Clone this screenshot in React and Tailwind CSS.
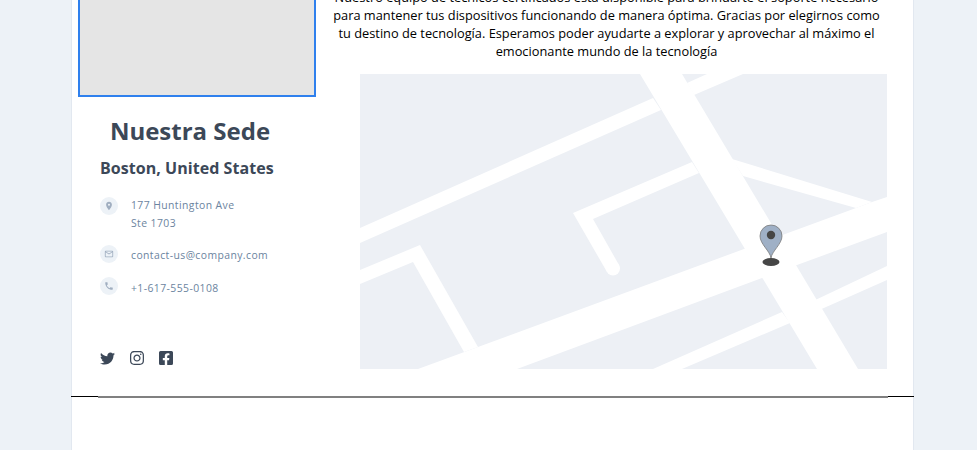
import React from "react";
import { FaTwitter, FaInstagram, FaFacebookSquare } from "react-icons/fa";
import { MdLocationOn, MdMailOutline, MdPhone } from "react-icons/md";

const roads = [
  "0,154 293,24 301,36 0,169",
  "327,9 347,0 383,0 334,21",
  "0,196 60,171 118,273 104,278 53,188 0,210",
  "58,295 118,273 384,175 496,134 512,128 527,123 527,158 437,191 157,295",
  "372,85 512,128 496,134 383,102",
  "213,139 332,88 339,99 233,145 259,191 247,198 213,139",
  "293,295 422,238 430,249 322,295",
  "430,238 527,192 527,206 430,249",
  "280,0 322,0 498,295 457,295",
];

const Contact = ({ icon: Ic, lines, className = "", textClass = "" }) => (
  <div className={`flex items-start gap-[13px] ${className}`}>
    <span className="flex h-[18px] w-[18px] shrink-0 items-center justify-center rounded-full bg-[#edf2f7] text-[#a0aec0]">
      <Ic size={10} />
    </span>
    <div className={`text-[10.4px] leading-[17.5px] tracking-[0.42px] text-[#6b84a0] ${textClass}`}>
      {lines.map((l) => (
        <div key={l}>{l}</div>
      ))}
    </div>
  </div>
);

export default function App() {
  return (
    <div className="h-[450px] overflow-hidden bg-[#edf2f7] font-['Open_Sans',sans-serif]">
      <div className="relative -mt-[200px] ml-[71px] h-[650px] w-[843px] border-x border-[#e2e8f0] bg-white">
        <div className="flex h-[596px] pl-[6px]">
          <div className="w-[238px] shrink-0">
            <div className="h-[297px] border-2 border-[#2f80ed] bg-[#e5e5e5]"></div>
            <h2 className="mt-[18px] pr-[14px] text-center text-[24px] font-bold leading-[32px] text-[#3c4858]">
              Nuestra Sede
            </h2>
            <div className="mt-[9px] pl-[22px]">
              <div className="text-[16px] font-bold leading-[24px] tracking-[0.05px] text-[#3c4858]">
                Boston, United States
              </div>
              <Contact icon={MdLocationOn} lines={["177 Huntington Ave", "Ste 1703"]} className="mt-[17px]" />
              <Contact
                icon={MdMailOutline}
                lines={["contact-us@company.com"]}
                className="mt-[13px]"
                textClass="pt-[2px]"
              />
              <Contact icon={MdPhone} lines={["+1-617-555-0108"]} className="mt-[12px]" textClass="pt-[3px]" />
              <div className="mt-[53px] flex items-center gap-[13px] text-[#3c4858]">
                <FaTwitter size={15} className="mr-px" />
                <FaInstagram size={16} />
                <FaFacebookSquare size={16} />
              </div>
            </div>
          </div>
          <div className="ml-[10px] w-[561px]">
            <p className="mt-[188px] text-center text-[12.8px] leading-[18px] text-black">
              Nuestro equipo de técnicos certificados está disponible para brindarte el soporte necesario para mantener
              tus dispositivos funcionando de manera óptima. Gracias por elegirnos como tu destino de tecnología.
              Esperamos poder ayudarte a explorar y aprovechar al máximo el emocionante mundo de la tecnología
            </p>
            <div className="relative ml-[34px] mt-[14px] h-[295px] w-[527px] bg-[#edf0f5]">
              <svg width="527" height="295" viewBox="0 0 527 295" className="block">
                {roads.map((p) => (
                  <polygon key={p} points={p} fill="#fff" />
                ))}
                <circle cx="253" cy="194.5" r="7" fill="#fff" />
              </svg>
              <svg width="24" height="44" viewBox="0 0 24 44" className="absolute left-[399px] top-[150px]">
                <ellipse cx="12" cy="38" rx="8.5" ry="4" fill="#464646" />
                <path
                  d="M12 34C11 27 1 20 1 12a11 11 0 0 1 22 0c0 8-10 15-11 22z"
                  fill="#9fb0c6"
                  stroke="#7a7a7a"
                  strokeWidth="0.8"
                />
                <circle cx="12" cy="11" r="4.2" fill="#464646" />
              </svg>
            </div>
          </div>
        </div>
        <div className="-mx-px border-t border-black">
          <div className="ml-[27px] mr-[26px] -mt-px h-[2px] bg-[#808080]"></div>
        </div>
      </div>
    </div>
  );
}
